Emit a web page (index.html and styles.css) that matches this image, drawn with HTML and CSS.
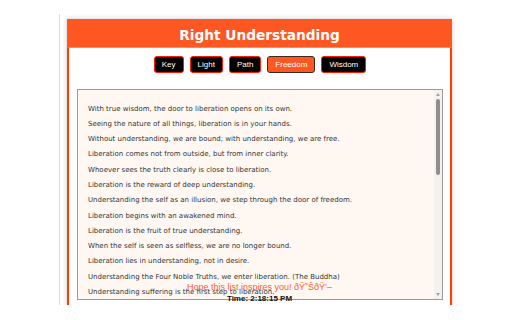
FILE: index.html
```html
<!DOCTYPE html>
<html lang="en">
<head>
<meta charset="utf-8">
<title>Right Understanding</title>
<link rel="stylesheet" href="styles.css">
</head>
<body>
<div class="frame">
  <div class="card">
    <header class="card-head"><h1 class="title">Right Understanding</h1></header>
    <div class="card-body">
      <nav class="tabs">
        <button class="tab">Key</button>
        <button class="tab">Light</button>
        <button class="tab">Path</button>
        <button class="tab tab-active">Freedom</button>
        <button class="tab">Wisdom</button>
      </nav>
      <div class="quotes">
        <div class="quote-list">
          <div class="quote">With true wisdom, the door to liberation opens on its own.</div>
          <div class="quote">Seeing the nature of all things, liberation is in your hands.</div>
          <div class="quote">Without understanding, we are bound; with understanding, we are free.</div>
          <div class="quote">Liberation comes not from outside, but from inner clarity.</div>
          <div class="quote">Whoever sees the truth clearly is close to liberation.</div>
          <div class="quote">Liberation is the reward of deep understanding.</div>
          <div class="quote">Understanding the self as an illusion, we step through the door of freedom.</div>
          <div class="quote">Liberation begins with an awakened mind.</div>
          <div class="quote">Liberation is the fruit of true understanding.</div>
          <div class="quote">When the self is seen as selfless, we are no longer bound.</div>
          <div class="quote">Liberation lies in understanding, not in desire.</div>
          <div class="quote">Understanding the Four Noble Truths, we enter liberation. (The Buddha)</div>
          <div class="quote">Understanding suffering is the first step to liberation.</div>
        </div>
        <div class="scrollbar">
          <span class="arrow arrow-up"></span>
          <span class="track"><span class="thumb"></span></span>
          <span class="arrow arrow-down"></span>
        </div>
      </div>
      <div class="footer">
        <p class="wish">Hope this list inspires you! ðŸ˜ŠðŸ’–</p>
        <p class="clock">Time: 2:18:15 PM</p>
      </div>
    </div>
  </div>
</div>
</body>
</html>
```
FILE: styles.css
```css
html, body {
  margin: 0;
  padding: 0;
  background: #ffffff;
}

.frame {
  margin: 14px 0 0 59px;
  border-left: 1px solid #dcdcdc;
  height: 291px;
  padding: 5px 0 0 7px;
  box-sizing: border-box;
}

.card {
  width: 385px;
  height: 287px;
  display: flex;
  flex-direction: column;
  box-shadow: 0 0 5px rgba(0, 0, 0, 0.22);
}

.card-head {
  background: #ff5722;
  height: 28px;
  padding-top: 4px;
  box-sizing: border-box;
}

.title {
  margin: 0;
  font-family: "DejaVu Sans", Verdana, sans-serif;
  font-weight: bold;
  font-size: 13.7px;
  line-height: 24px;
  color: #ffffff;
  text-align: center;
}

.card-body {
  position: relative;
  flex: 1;
  background: #ffffff;
  border-left: 2px solid #ff3d00;
  border-right: 2px solid #ff3d00;
  border-top: 1px solid #a8a8a8;
  padding: 8px 7px 0 8px;
  display: flex;
  flex-direction: column;
}

.tabs {
  display: flex;
  justify-content: center;
  gap: 6px;
}

.tab {
  height: 17px;
  margin: 0;
  padding: 0 7px;
  border: 1px solid #ff1a00;
  border-radius: 3px;
  background: #000000;
  color: #ffffff;
  font-family: "Liberation Sans", Arial, sans-serif;
  font-size: 8px;
  line-height: 15px;
}

.tab-active {
  background: #ff5722;
  border-color: #3a2a26;
}

.quotes {
  margin-top: 16px;
  height: 211px;
  box-sizing: border-box;
  border: 1px solid #9a9a9a;
  background: #fff8f2;
  display: flex;
  overflow: hidden;
}

.quote-list {
  flex: 1;
  padding: 11.5px 0 0 10px;
  overflow: hidden;
}

.quote {
  font-family: "DejaVu Sans", Verdana, sans-serif;
  font-size: 7px;
  line-height: 15.3px;
  color: #333333;
  white-space: nowrap;
}

.scrollbar {
  width: 8px;
  background: #f4f1ee;
  display: flex;
  flex-direction: column;
  align-items: center;
}

.arrow {
  width: 0;
  height: 0;
  border-left: 2.5px solid transparent;
  border-right: 2.5px solid transparent;
  margin: 3px 0 3px 0;
}

.arrow-up {
  border-bottom: 3px solid #a3a3a3;
}

.arrow-down {
  border-top: 3px solid #a3a3a3;
}

.track {
  flex: 1;
  width: 100%;
  display: flex;
  justify-content: center;
}

.thumb {
  width: 4px;
  height: 76px;
  border-radius: 2px;
  background: #8e8e8e;
}

.footer {
  position: absolute;
  top: 233px;
  left: 0;
  right: 0;
  text-align: center;
}

.wish {
  margin: 0;
  font-family: "Liberation Sans", Arial, sans-serif;
  font-size: 9px;
  line-height: 13px;
  color: #ff5a36;
}

.clock {
  margin: 0;
  font-family: "Liberation Sans", Arial, sans-serif;
  font-weight: bold;
  font-size: 8px;
  line-height: 10px;
  color: #111111;
}
```
